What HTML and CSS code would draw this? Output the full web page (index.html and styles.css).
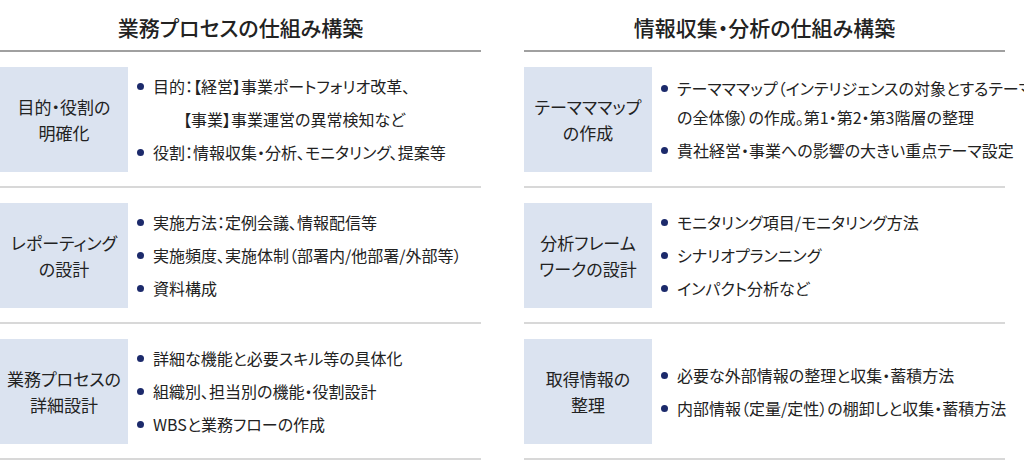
FILE: index.html
```html
<!DOCTYPE html>
<html lang="ja">
<head>
<meta charset="utf-8">
<link rel="stylesheet" href="styles.css">
</head>
<body>
<div class="page">
  <section class="col">
    <h2 class="col-title">業務プロセスの仕組み構築</h2>
    <div class="row">
      <div class="label">目的・役割の<br>明確化</div>
      <ul class="items">
        <li>目的：【経営】事業ポートフォリオ改革、</li>
        <li class="cont">【事業】事業運営の異常検知など</li>
        <li>役割：情報収集・分析、モニタリング、提案等</li>
      </ul>
    </div>
    <div class="row">
      <div class="label">レポーティング<br>の設計</div>
      <ul class="items">
        <li>実施方法：定例会議、情報配信等</li>
        <li>実施頻度、実施体制（部署内/他部署/外部等）</li>
        <li>資料構成</li>
      </ul>
    </div>
    <div class="row">
      <div class="label">業務プロセスの<br>詳細設計</div>
      <ul class="items">
        <li>詳細な機能と必要スキル等の具体化</li>
        <li>組織別、担当別の機能・役割設計</li>
        <li>WBSと業務フローの作成</li>
      </ul>
    </div>
  </section>
  <section class="col">
    <h2 class="col-title">情報収集・分析の仕組み構築</h2>
    <div class="row">
      <div class="label">テーマママップ<br>の作成</div>
      <ul class="items">
        <li>テーマママップ（インテリジェンスの対象とするテーマ<br>の全体像）の作成。第1・第2・第3階層の整理</li>
        <li>貴社経営・事業への影響の大きい重点テーマ設定</li>
      </ul>
    </div>
    <div class="row">
      <div class="label">分析フレーム<br>ワークの設計</div>
      <ul class="items">
        <li>モニタリング項目/モニタリング方法</li>
        <li>シナリオプランニング</li>
        <li>インパクト分析など</li>
      </ul>
    </div>
    <div class="row">
      <div class="label">取得情報の<br>整理</div>
      <ul class="items">
        <li>必要な外部情報の整理と収集・蓄積方法</li>
        <li>内部情報（定量/定性）の棚卸しと収集・蓄積方法</li>
      </ul>
    </div>
  </section>
</div>
</body>
</html>
```

FILE: styles.css
```css
html, body {
  margin: 0;
  padding: 0;
  background: #ffffff;
  overflow: hidden;
}
body {
  font-family: "Noto Sans CJK JP", "Noto Sans", sans-serif;
  color: #222222;
  font-feature-settings: "palt";
}
.page {
  display: flex;
  gap: 43px;
  width: 1100px;
}
.col {
  width: 481px;
  flex: none;
}
.col-title {
  margin: 0;
  padding: 12px 0 8px;
  font-size: 21px;
  line-height: 30px;
  font-weight: 500;
  text-align: center;
  border-bottom: 2px solid #a0a0a0;
}
.row {
  display: flex;
  align-items: center;
  padding: 15px 0 14px;
  border-bottom: 2px solid #d8d8d8;
}
.label {
  flex: none;
  width: 128px;
  height: 105px;
  background: #dbe3f0;
  display: flex;
  align-items: center;
  justify-content: center;
  text-align: center;
  font-size: 17px;
  line-height: 26px;
}
.items {
  list-style: none;
  margin: 0;
  padding: 0 0 0 25px;
  display: flex;
  flex-direction: column;
  gap: 4px;
  font-size: 16px;
  line-height: 29px;
  white-space: nowrap;
}
.items li {
  position: relative;
}
.items li::before {
  content: "";
  position: absolute;
  left: -16px;
  top: 11px;
  width: 7px;
  height: 7px;
  border-radius: 50%;
  background: #1c2a6b;
}
.items li.cont {
  padding-left: 30px;
}
.items li.cont::before {
  display: none;
}
```
